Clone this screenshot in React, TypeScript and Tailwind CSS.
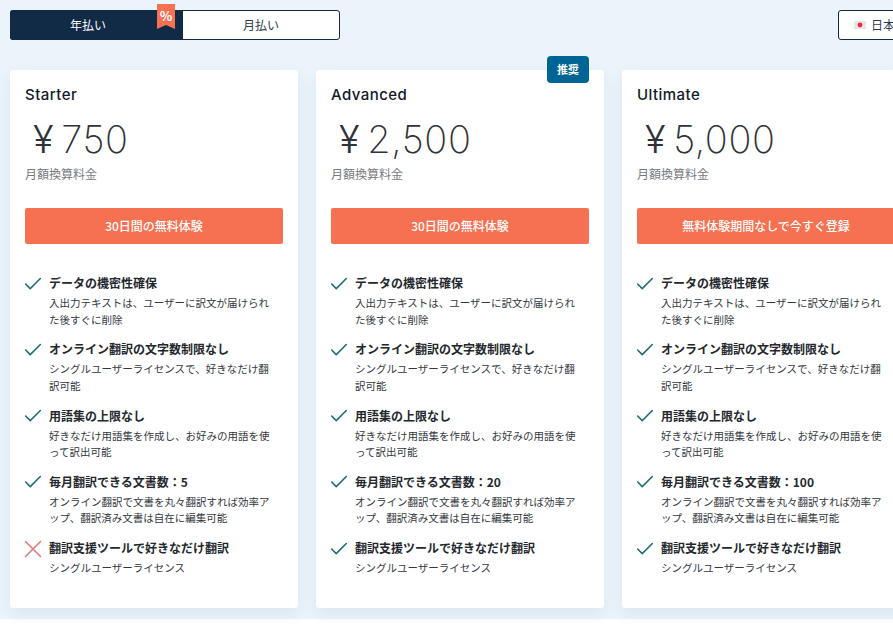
import { Check, X } from 'lucide-react';

const cjk = '"Noto Sans CJK JP", sans-serif';
const latin = '"Inter", "Noto Sans CJK JP", sans-serif';

type Feature = { title: string; desc: string[]; ok?: boolean };

const baseFeatures = (docs: string, lastOk: boolean): Feature[] => [
  { title: 'データの機密性確保', desc: ['入出力テキストは、ユーザーに訳文が届けられ', 'た後すぐに削除'], ok: true },
  { title: 'オンライン翻訳の文字数制限なし', desc: ['シングルユーザーライセンスで、好きなだけ翻', '訳可能'], ok: true },
  { title: '用語集の上限なし', desc: ['好きなだけ用語集を作成し、お好みの用語を使', 'って訳出可能'], ok: true },
  { title: `毎月翻訳できる文書数：${docs}`, desc: ['オンライン翻訳で文書を丸々翻訳すれば効率ア', 'ップ、翻訳済み文書は自在に編集可能'], ok: true },
  { title: '翻訳支援ツールで好きなだけ翻訳', desc: ['シングルユーザーライセンス'], ok: lastOk },
];

const plans = [
  { name: 'Starter', price: '750', cta: '30日間の無料体験', features: baseFeatures('5', false) },
  { name: 'Advanced', price: '2,500', cta: '30日間の無料体験', features: baseFeatures('20', true), recommended: true },
  { name: 'Ultimate', price: '5,000', cta: '無料体験期間なしで今すぐ登録', features: baseFeatures('100', true) },
];

const PlanCard = ({ plan }: { plan: (typeof plans)[number] }) => (
  <div className="relative w-[288px] h-[538px] shrink-0 bg-white rounded-[3px] shadow-[0_6px_16px_rgba(15,45,75,0.07)] px-[15px] pt-[15px]">
    {plan.recommended && (
      <div className="absolute right-[15px] top-[-14px] w-[42px] h-[27px] rounded-[4px] bg-[#006494] text-white text-[11px] font-bold flex items-center justify-center" style={{ fontFamily: cjk }}>
        推奨
      </div>
    )}
    <h3 className="text-[15px] leading-[20px] font-medium text-[#111827] tracking-[0.45px]" style={{ fontFamily: latin }}>{plan.name}</h3>
    <div className="mt-[14px] pl-[8px] h-[40px] flex items-center text-[38px] leading-[40px] font-extralight tracking-[0.6px] text-[#2f3238]" style={{ fontFamily: latin }}>
      <span className="mr-[7px] font-light">¥</span>
      <span>{plan.price}</span>
    </div>
    <p className="mt-[6px] text-[12px] leading-[18px] text-[#777b80]" style={{ fontFamily: cjk }}>月額換算料金</p>
    <button className="mt-[25px] w-[258px] h-[36px] pb-[1px] rounded-[2px] bg-[#f57151] text-white text-[12px] font-medium flex items-center justify-center" style={{ fontFamily: cjk }}>
      {plan.cta}
    </button>
    <ul className="mt-[30px] flex flex-col gap-[12.25px]" style={{ fontFamily: cjk }}>
      {plan.features.map((f) => (
        <li key={f.title} className="flex">
          <div className="w-[24px] shrink-0">
            {f.ok ? (
              <Check className="w-[22px] h-[22px] -ml-[3.5px] -mt-[1.5px] text-[#1c6e70]" strokeWidth={1.7} />
            ) : (
              <X className="w-[30px] h-[30px] -ml-[7.5px] -mt-[5px] text-[#e5787c]" strokeWidth={1.25} />
            )}
          </div>
          <div className="min-w-0">
            <div className="text-[12px] leading-[18px] font-bold text-[#24282d] whitespace-nowrap">{f.title}</div>
            <div className="mt-[3px] text-[10.5px] leading-[16.5px] text-[#34383d] whitespace-nowrap">
              {f.desc.map((line) => (
                <div key={line}>{line}</div>
              ))}
            </div>
          </div>
        </li>
      ))}
    </ul>
  </div>
);

const App = () => {
  return (
    <div className="w-[893px] h-[643px] overflow-hidden bg-white">
      <section className="h-[619px] bg-[#ebf4fb] px-[10px] pt-[10px]">
        <div className="flex justify-between">
          <div className="relative w-[330px] h-[30px] flex rounded-[3px] border border-[#112b47] bg-white text-[12px]" style={{ fontFamily: cjk }}>
            <div className="w-[173px] -ml-px -my-px pr-[17px] rounded-l-[3px] bg-[#112b47] text-white flex items-center justify-center">年払い</div>
            <div className="flex-1 flex items-center justify-center text-[#2b3b4d]">月払い</div>
            <div className="absolute left-[146px] top-[-7px] w-[18px] h-[25px] bg-[#f57151] text-white text-[13px] font-bold leading-[23px] text-center [clip-path:polygon(0_0,100%_0,100%_100%,50%_84%,0_100%)]">%</div>
          </div>
          <div className="w-[80px] h-[30px] -mr-[35px] rounded-[3px] border border-[#112b47] bg-white flex items-center pl-[15px] text-[12px] text-[#2b3b4d] shrink-0" style={{ fontFamily: cjk }}>
            <svg width="12" height="8" viewBox="0 0 12 8" className="mr-[5px] shrink-0">
              <rect width="12" height="8" fill="#e6e6e6" />
              <circle cx="6" cy="4" r="2.4" fill="#ee2b39" />
            </svg>
            <span className="whitespace-nowrap">日本語</span>
          </div>
        </div>
        <div className="mt-[30px] flex gap-[18px]">
          {plans.map((plan) => (
            <PlanCard key={plan.name} plan={plan} />
          ))}
        </div>
      </section>
    </div>
  );
};

export default App;
